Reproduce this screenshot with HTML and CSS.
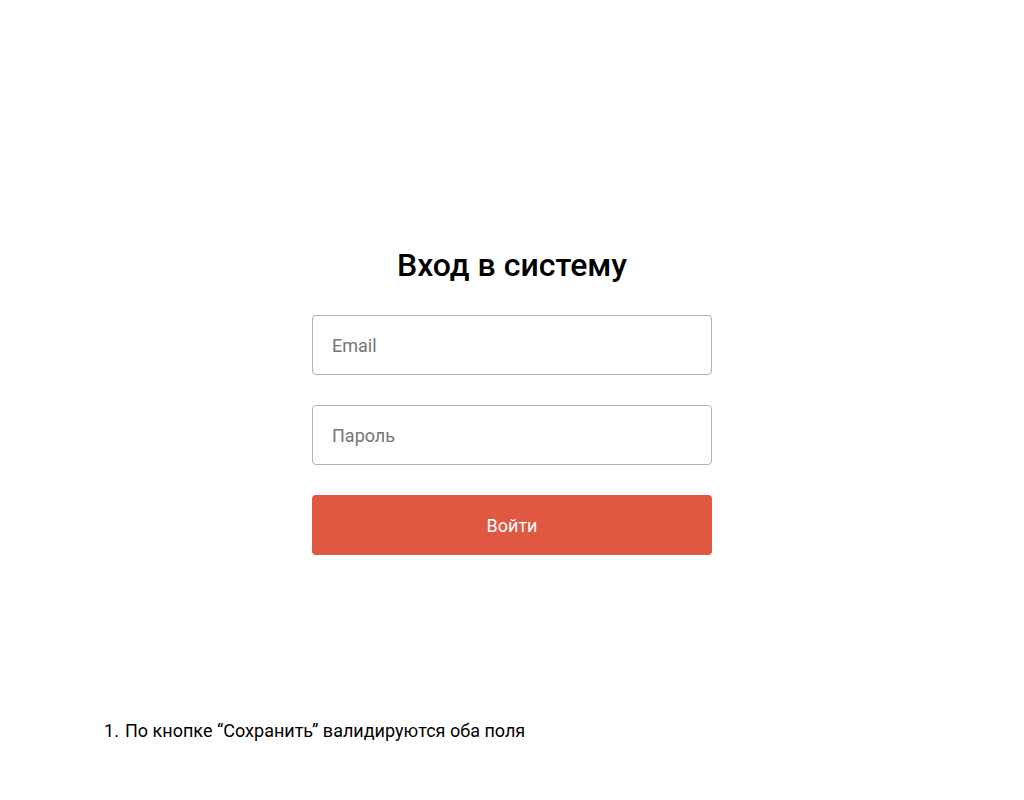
FILE: index.html
```html
<!DOCTYPE html>
<html lang="ru">
<head>
<meta charset="utf-8">
<title>Вход в систему</title>
<link rel="stylesheet" href="styles.css">
</head>
<body>
<main class="page">
  <form class="login">
    <h1 class="title">Вход в систему</h1>
    <input class="field" type="email" placeholder="Email">
    <input class="field" type="password" placeholder="Пароль">
    <button class="submit" type="button">Войти</button>
  </form>
  <ol class="notes">
    <li class="note">По кнопке “Сохранить” валидируются оба поля</li>
  </ol>
</main>
</body>
</html>
```
FILE: styles.css
```css
* { box-sizing: border-box; }
html, body { margin: 0; padding: 0; background: #fff; }
body { font-family: Roboto, "Noto Sans", sans-serif; color: #000; }
.page { padding-top: 246px; }
.login {
  width: 400px;
  margin: 0 auto;
  display: flex;
  flex-direction: column;
  gap: 30px;
}
.title {
  margin: 0 0 1px;
  font-size: 32px;
  line-height: 38px;
  font-weight: 500;
  text-align: center;
}
.field {
  display: block;
  width: 100%;
  height: 60px;
  border: 1px solid #a9b4be;
  border-radius: 4px;
  padding: 0 19px;
  font-family: inherit;
  font-size: 18px;
  color: #333;
  outline: none;
}
.field::placeholder { color: #757575; }
.submit {
  display: block;
  width: 100%;
  height: 60px;
  border: none;
  border-radius: 4px;
  background: #e05842;
  color: #fff;
  font-family: inherit;
  font-size: 18px;
  cursor: pointer;
}
.notes {
  margin: 166px 0 0 104px;
  padding: 0;
  list-style: none;
  counter-reset: note;
  font-size: 18px;
  line-height: 20px;
}
.note { counter-increment: note; }
.note::before {
  content: counter(note) ".";
  display: inline-block;
  width: 21px;
}
```
